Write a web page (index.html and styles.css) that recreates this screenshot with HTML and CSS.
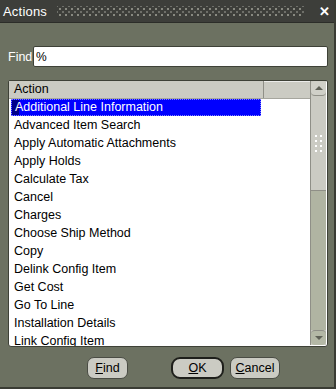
FILE: index.html
```html
<!DOCTYPE html>
<html lang="en">
<head>
    <meta charset="UTF-8">
    <title>Actions</title>
    <link rel="stylesheet" href="styles.css">
</head>
<body>
    <div class="dialog">
        <div class="titlebar">
            <span class="title">Actions</span>
            <span class="grip"></span>
            <span class="close">&#x2715;</span>
        </div>
        <div class="content">
            <div class="find-row">
                <label for="find">Find</label>
                <input type="text" id="find" value="%">
            </div>
            <div class="listbox">
                <div class="list">
                    <div class="list-head"><span class="col">Action</span><span class="col-rest"></span></div>
                    <div class="row selected"><span>Additional Line Information</span></div>
                    <div class="row"><span>Advanced Item Search</span></div>
                    <div class="row"><span>Apply Automatic Attachments</span></div>
                    <div class="row"><span>Apply Holds</span></div>
                    <div class="row"><span>Calculate Tax</span></div>
                    <div class="row"><span>Cancel</span></div>
                    <div class="row"><span>Charges</span></div>
                    <div class="row"><span>Choose Ship Method</span></div>
                    <div class="row"><span>Copy</span></div>
                    <div class="row"><span>Delink Config Item</span></div>
                    <div class="row"><span>Get Cost</span></div>
                    <div class="row"><span>Go To Line</span></div>
                    <div class="row"><span>Installation Details</span></div>
                    <div class="row"><span>Link Config Item</span></div>
                </div>
                <div class="scrollbar">
                    <div class="arrow up"></div>
                    <div class="track">
                        <div class="thumb">
                            <i></i><i></i><i></i><i></i><i></i><i></i><i></i><i></i>
                        </div>
                    </div>
                    <div class="arrow down"></div>
                </div>
            </div>
            <div class="buttons">
                <button class="btn find-btn"><u>F</u>ind</button>
                <button class="btn default"><u>O</u>K</button>
                <button class="btn"><u>C</u>ancel</button>
            </div>
        </div>
    </div>
</body>
</html>
```

FILE: styles.css
```css
body {
    margin: 0;
    background: #6b6f60;
    font-family: "Liberation Sans", Arial, sans-serif;
    font-size: 12px;
}
.dialog {
    width: 336px;
    height: 389px;
    box-sizing: border-box;
    background: #6c7161;
    border-right: 2px solid #3a3c34;
    border-bottom: 2px solid #3a3c34;
    display: flex;
    flex-direction: column;
}
.titlebar {
    height: 22px;
    background: #3d3e3a;
    display: flex;
    align-items: center;
    color: #ffffff;
    padding: 0 4px 0 3px;
    border-bottom: 1px solid #2c2d29;
}
.title {
    font-size: 13px;
    letter-spacing: 0.2px;
}
.grip {
    flex: 1;
    height: 10px;
    margin: 0 14px 0 10px;
    background-image:
        radial-gradient(circle, #8a8b82 0.7px, transparent 1.1px),
        radial-gradient(circle, #6f706a 0.7px, transparent 1.1px);
    background-size: 6px 6px, 6px 6px;
    background-position: 0 0, 3px 3px;
}
.close {
    font-size: 13px;
    font-weight: bold;
}
.content {
    flex: 1;
    display: flex;
    flex-direction: column;
    padding: 23px 6px 0 8px;
}
.find-row {
    display: flex;
    align-items: center;
    height: 21px;
}
.find-row label {
    color: #ffffff;
    font-size: 12.5px;
    width: 25px;
    flex-shrink: 0;
}
.find-row input {
    flex: 1;
    min-width: 0;
    height: 21px;
    box-sizing: border-box;
    border: 1px solid #3e4137;
    border-radius: 2px;
    padding: 0 2px;
    font-family: "Liberation Sans", Arial, sans-serif;
    font-size: 12px;
    outline: none;
}
.listbox {
    margin-top: 13px;
    height: 265px;
    display: flex;
    background: #ffffff;
    border: 1px solid #3e4137;
    border-radius: 2px 2px 3px 3px;
    overflow: hidden;
}
.list {
    flex: 1;
    overflow: hidden;
}
.list-head {
    display: flex;
    height: 17px;
    background: #cbcbc3;
    border-bottom: 1px solid #a6a69e;
}
.list-head .col {
    width: 249px;
    padding-left: 5px;
    line-height: 17px;
    border-right: 1px solid #8f8f87;
    font-size: 12.5px;
}
.list-head .col-rest {
    flex: 1;
    border-top: 1px solid #ececea;
}
.row {
    height: 18px;
    line-height: 18px;
    padding-left: 5px;
    font-size: 12.5px;
    color: #000000;
    white-space: nowrap;
}
.row.selected {
    width: 250px;
    margin-left: 2px;
    padding-left: 3px;
    background: #0000ff;
    color: #ffffff;
    border: 1px dotted #8080ff;
    box-sizing: border-box;
    height: 17px;
    line-height: 15px;
    box-shadow: inset 7px 0 0 #00008a;
}
.scrollbar {
    width: 15px;
    display: flex;
    flex-direction: column;
    background: #c9c9c1;
    border-left: 1px solid #8f8f87;
    margin: 0 1px 1px 0;
}
.arrow {
    height: 14px;
    background: #d0d0c8;
    border-radius: 4px;
    display: flex;
    justify-content: center;
    align-items: center;
}
.arrow.up {
    border-bottom: 1px solid #8f8f87;
}
.arrow.up::after {
    content: "";
    border-left: 4px solid transparent;
    border-right: 4px solid transparent;
    border-bottom: 4px solid #5f6157;
}
.arrow.down {
    border-top: 1px solid #8f8f87;
    background: #b4b8a6;
}
.arrow.down::after {
    content: "";
    border-left: 4px solid transparent;
    border-right: 4px solid transparent;
    border-top: 4px solid #5f6157;
}
.track {
    flex: 1;
    background: #b0b4a2;
    display: flex;
    flex-direction: column;
}
.thumb {
    height: 94px;
    background: #cbcbc3;
    border-bottom: 1px solid #8f8f87;
    display: grid;
    grid-template-columns: 3px 3px;
    justify-content: center;
    column-gap: 2px;
    row-gap: 3px;
    align-content: center;
}
.thumb i {
    width: 2px;
    height: 2px;
    background: #ffffff;
}
.buttons {
    display: flex;
    margin-top: 10px;
    padding-left: 79px;
}
.btn {
    height: 22px;
    border: 1px solid #4a4c44;
    border-radius: 7px;
    background: #cbcbc3;
    font-family: "Liberation Sans", Arial, sans-serif;
    font-size: 12.5px;
    color: #000000;
    padding: 0;
}
.find-btn {
    width: 41px;
    margin-right: 43px;
}
.btn.default {
    width: 53px;
    border: 2px solid #1e1f1b;
    border-radius: 9px;
    margin-right: 6px;
}
.btn:last-child {
    width: 50px;
}
```
